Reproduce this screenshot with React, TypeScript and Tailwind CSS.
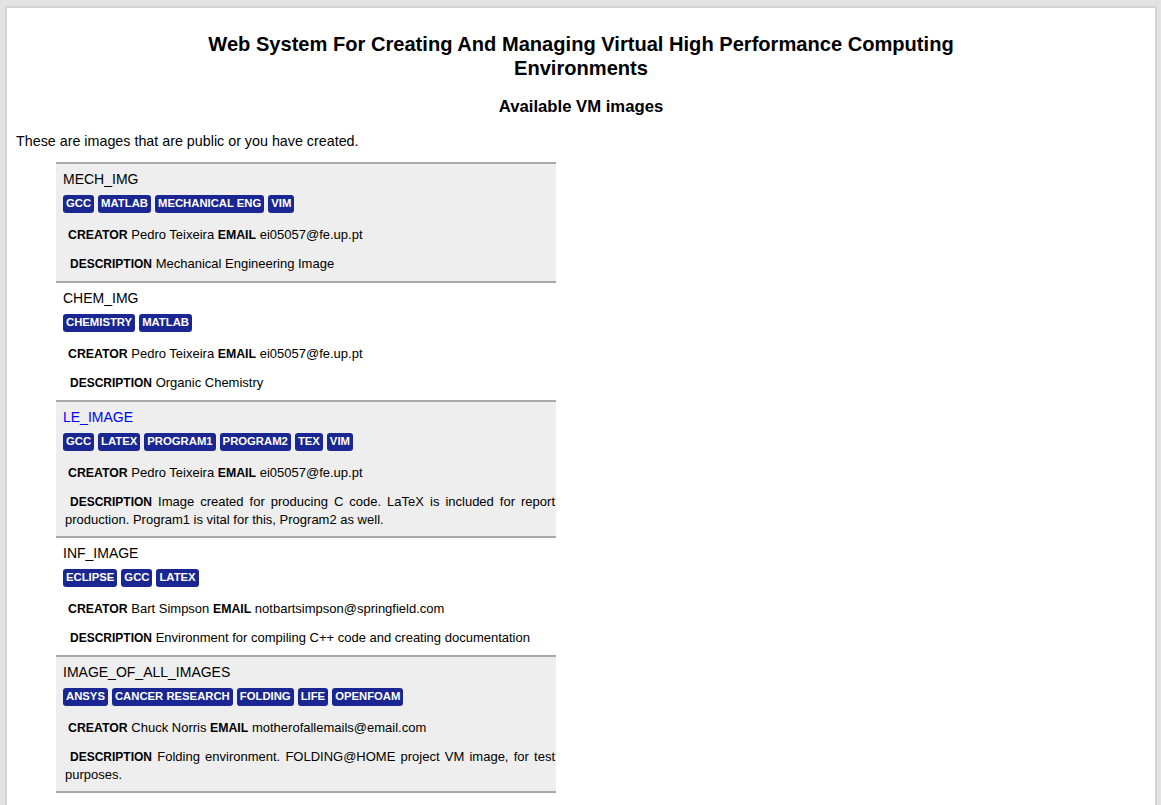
const images = [
  {
    name: 'MECH_IMG',
    tags: ['GCC', 'MATLAB', 'MECHANICAL ENG', 'VIM'],
    creator: 'Pedro Teixeira',
    email: 'ei05057@fe.up.pt',
    description: 'Mechanical Engineering Image',
  },
  {
    name: 'CHEM_IMG',
    tags: ['CHEMISTRY', 'MATLAB'],
    creator: 'Pedro Teixeira',
    email: 'ei05057@fe.up.pt',
    description: 'Organic Chemistry',
  },
  {
    name: 'LE_IMAGE',
    tags: ['GCC', 'LATEX', 'PROGRAM1', 'PROGRAM2', 'TEX', 'VIM'],
    creator: 'Pedro Teixeira',
    email: 'ei05057@fe.up.pt',
    description:
      'Image created for producing C code. LaTeX is included for report production. Program1 is vital for this, Program2 as well.',
    active: true,
  },
  {
    name: 'INF_IMAGE',
    tags: ['ECLIPSE', 'GCC', 'LATEX'],
    creator: 'Bart Simpson',
    email: 'notbartsimpson@springfield.com',
    description: 'Environment for compiling C++ code and creating documentation',
  },
  {
    name: 'IMAGE_OF_ALL_IMAGES',
    tags: ['ANSYS', 'CANCER RESEARCH', 'FOLDING', 'LIFE', 'OPENFOAM'],
    creator: 'Chuck Norris',
    email: 'motherofallemails@email.com',
    description: 'Folding environment. FOLDING@HOME project VM image, for test purposes.',
  },
];

export default function App() {
  return (
    <div className="min-h-[805px] bg-[#e3e3e3] pt-[6px] pl-[5px] pr-[4px] font-['Liberation_Sans',Arial,sans-serif] text-black">
      <div className="min-h-[820px] border-2 border-[#d4d4d4] bg-white px-[9px] pt-[24px]">
        <h1 className="mx-auto max-w-[800px] text-center text-[20.1px] font-bold leading-[24px]">
          Web System For Creating And Managing Virtual High Performance Computing Environments
        </h1>
        <h2 className="mt-[17px] text-center text-[16.7px] font-bold leading-[19px]">Available VM images</h2>
        <p className="mt-[17px] text-[14.3px] leading-[16px]">These are images that are public or you have created.</p>

        {/* image list */}
        <ul className="mt-[13px] ml-[40px] w-[500px] border-b-2 border-[#aaaaaa]">
          {images.map((img, idx) => (
            <li
              key={img.name}
              className={`border-t-2 border-[#aaaaaa] px-[7px] pt-[7px] pb-[8px] ${idx % 2 === 0 ? 'bg-[#eeeeee]' : 'bg-white'}`}
            >
              <div className={`text-[14px] leading-[16px] ${img.active ? 'text-[#0000ff]' : 'text-black'}`}>{img.name}</div>
              <div className="mt-[8px] flex flex-wrap gap-[4px]">
                {img.tags.map((tag) => (
                  <span
                    key={tag}
                    className="flex h-[18px] items-center rounded-[3px] bg-[#1a2792] px-[3px] text-[11.3px] font-bold leading-none text-white"
                  >
                    {tag}
                  </span>
                ))}
              </div>
              <p className="mt-[13px] pl-[5px] text-[13px] leading-[18px]">
                <b className="text-[12.3px]">CREATOR</b> {img.creator} <b className="text-[12.3px]">EMAIL</b> {img.email}
              </p>
              <p className="mt-[11px] -mr-[6px] pl-[2px] indent-[5px] text-justify text-[13px] leading-[17px]">
                <b className="text-[12px]">DESCRIPTION</b> {img.description}
              </p>
            </li>
          ))}
        </ul>
      </div>
    </div>
  );
}
